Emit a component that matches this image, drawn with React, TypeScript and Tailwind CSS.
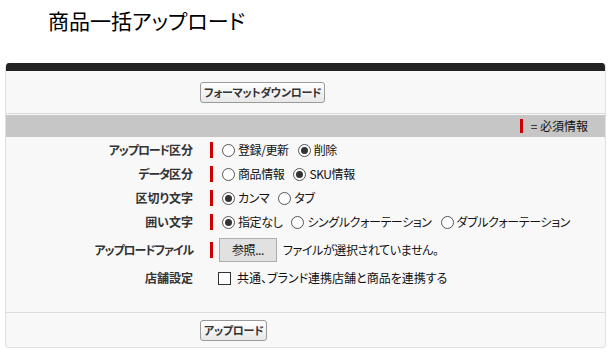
import React from "react";

const font = { fontFamily: '"Noto Sans CJK JP", "Noto Sans", sans-serif' };

function Radio({ checked }: { checked?: boolean }) {
  return (
    <span className="inline-flex h-[13px] w-[13px] shrink-0 items-center justify-center rounded-full border border-[#555] bg-white">
      {checked && <span className="h-[7px] w-[7px] rounded-full bg-[#333]" />}
    </span>
  );
}

function Option({ label, checked }: { label: string; checked?: boolean }) {
  return (
    <label className="flex items-center gap-[3px]">
      <Radio checked={checked} />
      <span>{label}</span>
    </label>
  );
}

// katakana in the labels is set narrower than the kanji
function Kana({ children }: { children: React.ReactNode }) {
  return <span className="tracking-[-1.1px]">{children}</span>;
}

function Row({
  label,
  required = true,
  tall,
  children,
}: {
  label: React.ReactNode;
  required?: boolean;
  tall?: boolean;
  children: React.ReactNode;
}) {
  return (
    <div className={`flex items-center ${tall ? "h-[32px]" : "h-[24px]"}`}>
      <div className="w-[187px] text-right text-[12px] font-bold text-[#333]">
        {label}
      </div>
      <div className="ml-[17px] w-[3px]">
        {required && <div className="h-[16px] w-[3px] bg-[#cc0000]" />}
      </div>
      <div className="ml-[9px] flex items-center gap-[9px] text-[12px] tracking-[-0.4px] text-[#111]">
        {children}
      </div>
    </div>
  );
}

function Btn({ children }: { children: React.ReactNode }) {
  return (
    <button className="h-[21px] rounded-[3px] border border-[#9a9a9a] bg-gradient-to-b from-white to-[#e8e8e8] px-[3px] text-[11px] font-bold tracking-[-0.3px] text-[#333]">
      {children}
    </button>
  );
}

export default function App() {
  return (
    <div className="h-[356px] w-[614px] bg-white [font-feature-settings:'palt']" style={font}>
      <h1 className="pl-[48px] pt-[6px] text-[21px] leading-[28px] text-black">
        商品一括アップロード
      </h1>
      <div className="ml-[5px] mt-[29px] w-[601px] overflow-hidden rounded-[4px] border border-[#e0e0e0] border-t-0 bg-[#f8f8f8]">
        <div className="h-[8px] bg-[#222]" />
        <div className="flex h-[42px] items-center pl-[194px]">
          <Btn>フォーマットダウンロード</Btn>
        </div>
        <div className="border-t border-[#dcdcdc] pt-px">
          <div className="flex h-[22px] items-center justify-end bg-[#c6c6c6] pr-[17px] text-[12px] text-[#111]">
            <span className="mr-[8px] h-[14px] w-[3px] bg-[#cc0000]" />
            <span>= 必須情報</span>
          </div>
        </div>
        <div className="pt-[1px] pb-[22px]">
          <Row label={<><Kana>アップロード</Kana>区分</>}>
            <Option label="登録/更新" />
            <Option label="削除" checked />
          </Row>
          <Row label={<><Kana>データ</Kana>区分</>}>
            <Option label="商品情報" />
            <Option label="SKU情報" checked />
          </Row>
          <Row label="区切り文字">
            <Option label="カンマ" checked />
            <Option label="タブ" />
          </Row>
          <Row label="囲い文字">
            <Option label="指定なし" checked />
            <Option label="シングルクォーテーション" />
            <Option label="ダブルクォーテーション" />
          </Row>
          <Row label={<Kana>アップロードファイル</Kana>} tall>
            <button className="-ml-[3px] h-[24px] w-[58px] border border-[#adadad] bg-[#e1e1e1] text-[12px] text-[#111]">
              参照...
            </button>
            <span className="-ml-[3px]">ファイルが選択されていません。</span>
          </Row>
          <div className="flex h-[24px] items-center">
            <div className="w-[187px] text-right text-[12px] font-bold text-[#333]">
              店舗設定
            </div>
            <div className="ml-[25px] flex items-center gap-[6px] text-[12px] text-[#111]">
              <span className="h-[13px] w-[13px] border border-[#333] bg-white" />
              <span>共通、ブランド連携店舗と商品を連携する</span>
            </div>
          </div>
        </div>
        <div className="flex h-[35px] items-center border-t border-[#dcdcdc] pl-[194px]">
          <Btn>アップロード</Btn>
        </div>
      </div>
    </div>
  );
}
